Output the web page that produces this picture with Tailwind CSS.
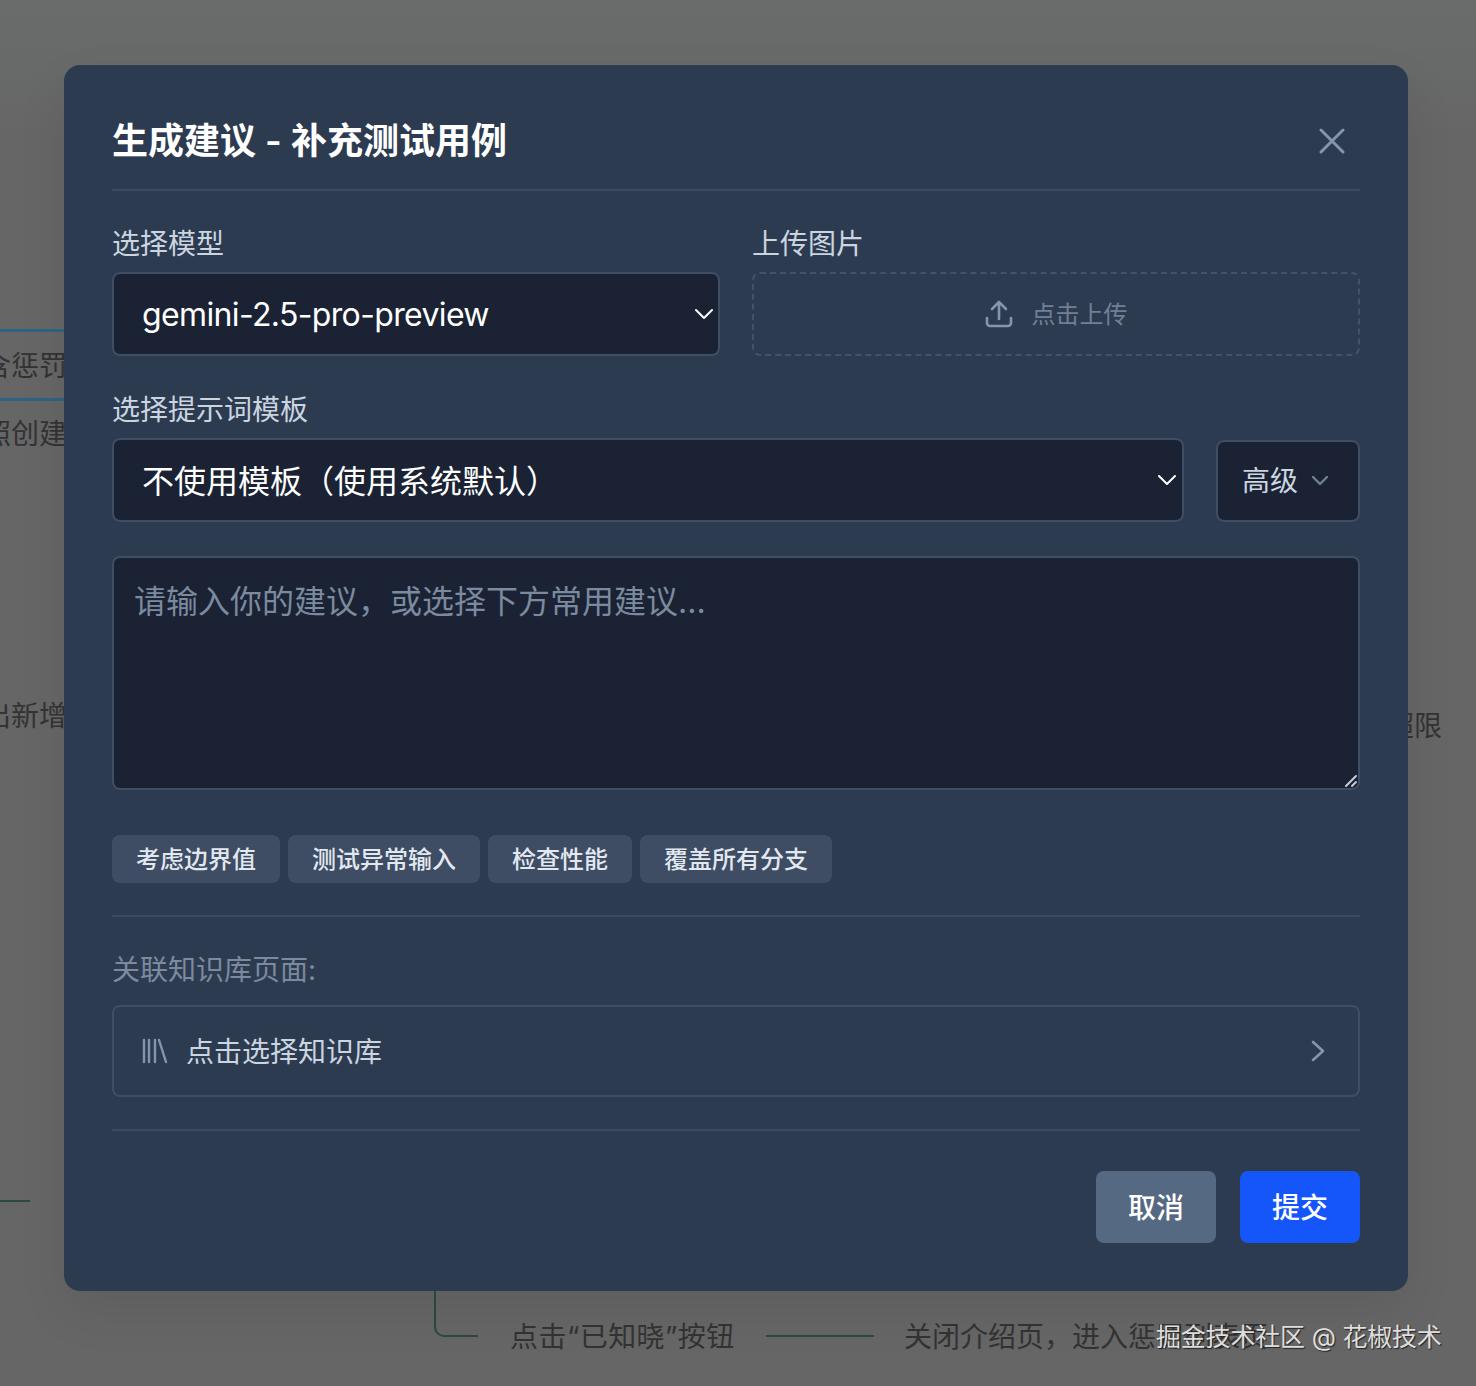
<!DOCTYPE html>
<html lang="zh-CN">
<head>
<meta charset="utf-8">
<script src="https://cdn.jsdelivr.net/npm/@tailwindcss/browser@4"></script>
<title>生成建议</title>
</head>
<body class="m-0 bg-[#666666] font-['Inter','Noto_Sans_CJK_SC',sans-serif]">
<div class="relative h-[1386px] w-[1476px] overflow-hidden bg-linear-to-b from-[#6a6c6c] to-[#666666] to-[10%]">
  <!-- dimmed page behind the dialog -->
  <div class="absolute left-0 top-[329px] h-[3px] w-[70px] bg-[#2d6483]"></div>
  <div class="absolute left-0 top-[398px] h-[3px] w-[70px] bg-[#2d6483]"></div>
  <div class="absolute left-[-17px] top-[346px] text-[28px] leading-[40px] text-[#333]">含惩罚</div>
  <div class="absolute left-[-17px] top-[414px] text-[28px] leading-[40px] text-[#333]">照创建</div>
  <div class="absolute left-[-17px] top-[696px] text-[28px] leading-[40px] text-[#333]">出新增</div>
  <div class="absolute left-[1386px] top-[706px] text-[28px] leading-[40px] text-[#333]">超限</div>
  <div class="absolute left-0 top-[1200px] h-[2px] w-[30px] bg-[#2b4a44]"></div>
  <div class="absolute left-[434px] top-[1280px] h-[57px] w-[44px] rounded-bl-[10px] border-b-2 border-l-2 border-[#2b4a44]"></div>
  <div class="absolute left-[510px] top-[1317px] text-[28px] leading-[40px] tracking-[0.45px] text-[#333]">点击“已知晓”按钮</div>
  <div class="absolute left-[766px] top-[1335px] h-[2px] w-[108px] bg-[#2b4a44]"></div>
  <div class="absolute left-[904px] top-[1317px] text-[28px] leading-[40px] text-[#333]">关闭介绍页，进入惩罚列表页</div>
  <div class="absolute left-[1156px] top-[1317px] z-20 text-[25px] leading-[40px] tracking-[-0.2px] text-[#dedede] [text-shadow:1px_1px_1px_#222]">掘金技术社区 @ 花椒技术</div>

  <!-- dialog -->
  <div class="absolute left-[64px] top-[65px] z-10 flex w-[1344px] flex-col rounded-[16px] bg-[#2d3b50] px-[48px] pb-[48px] shadow-[0_20px_50px_rgba(0,0,0,0.08)]">
    <div class="flex h-[126px] items-center justify-between border-b-2 border-[#3b4a61] pt-[44px] pb-[16px]">
      <h2 class="text-[36px] font-semibold leading-[44px] text-white">生成建议 - 补充测试用例</h2>
      <svg class="mr-[14px]" width="28" height="28" viewBox="0 0 28 28" fill="none" stroke="#8496ab" stroke-width="3" stroke-linecap="round"><path d="M3 3 25 25M25 3 3 25"/></svg>
    </div>

    <div class="mt-[31px] grid grid-cols-2 gap-[32px]">
      <div>
        <div class="mb-[6px] text-[28px] leading-[44px] text-[#cbd5e0]">选择模型</div>
        <div class="flex h-[84px] items-center justify-between rounded-[8px] border-2 border-[#3f4d65] bg-[#1a2233] pl-[28px] pr-[4px] text-[32px] text-white">
          <span class="pt-[2px] tracking-[-0.64px]">gemini-2.5-pro-preview</span>
          <svg width="20" height="12" viewBox="0 0 20 12" fill="none" stroke="#fff" stroke-width="2" stroke-linecap="round" stroke-linejoin="round"><path d="M2 2 10 10 18 2"/></svg>
        </div>
      </div>
      <div>
        <div class="mb-[6px] text-[28px] leading-[44px] text-[#cbd5e0]">上传图片</div>
        <div class="flex h-[84px] items-center justify-center gap-[19px] rounded-[8px] border-2 border-dashed border-[#445268] text-[24px] text-[#718096]">
          <svg width="28" height="28" viewBox="0 0 28 28" fill="none" stroke="#8496ab" stroke-width="2.6" stroke-linecap="round" stroke-linejoin="round"><path d="M14 19V2M7 9 14 2 21 9M2 18V23a3 3 0 0 0 3 3H23a3 3 0 0 0 3-3V18"/></svg>
          <span class="pt-[2px]">点击上传</span>
        </div>
      </div>
    </div>

    <div class="mt-[32px] text-[28px] leading-[44px] text-[#cbd5e0]">选择提示词模板</div>
    <div class="mt-[6px] flex items-end gap-[32px]">
      <div class="flex h-[84px] flex-1 items-center justify-between rounded-[8px] border-2 border-[#3f4d65] bg-[#1a2233] pl-[28px] pr-[5px] text-[32px] text-white">
        <span class="pt-[3px]">不使用模板（使用系统默认）</span>
        <svg width="20" height="12" viewBox="0 0 20 12" fill="none" stroke="#fff" stroke-width="2" stroke-linecap="round" stroke-linejoin="round"><path d="M2 2 10 10 18 2"/></svg>
      </div>
      <div class="flex h-[82px] w-[144px] items-center gap-[12px] rounded-[8px] border-2 border-[#3f4d65] bg-[#1a2233] pl-[24px] text-[28px] text-[#cbd5e0]">
        <span>高级</span>
        <svg width="20" height="12" viewBox="0 0 20 12" fill="none" stroke="#718096" stroke-width="2.4" stroke-linecap="round" stroke-linejoin="round"><path d="M3 2 10 9 17 2"/></svg>
      </div>
    </div>

    <div class="relative mt-[34px]">
      <textarea class="block h-[234px] w-full resize-none rounded-[8px] border-2 border-[#3f4d65] bg-[#1a2233] px-[20px] py-[20px] text-[32px] leading-[48px] text-white outline-none placeholder:text-[#7b8a9f]" placeholder="请输入你的建议，或选择下方常用建议..."></textarea>
      <svg class="pointer-events-none absolute bottom-[2px] right-[2px]" width="14" height="14" viewBox="0 0 14 14" fill="none" stroke="#c9ced6" stroke-width="2" stroke-linecap="round"><path d="M2 12 12 2M8 12 12 8"/></svg>
    </div>

    <div class="mt-[45px] flex gap-[8px]">
      <button class="h-[48px] rounded-[8px] bg-[#3e4c64] px-[24px] pt-[2px] text-[24px] font-medium text-[#e2e8f0]">考虑边界值</button>
      <button class="h-[48px] rounded-[8px] bg-[#3e4c64] px-[24px] pt-[2px] text-[24px] font-medium text-[#e2e8f0]">测试异常输入</button>
      <button class="h-[48px] rounded-[8px] bg-[#3e4c64] px-[24px] pt-[2px] text-[24px] font-medium text-[#e2e8f0]">检查性能</button>
      <button class="h-[48px] rounded-[8px] bg-[#3e4c64] px-[24px] pt-[2px] text-[24px] font-medium text-[#e2e8f0]">覆盖所有分支</button>
    </div>

    <div class="mt-[32px] border-t-2 border-[#3b4a61] pt-[32px]">
      <div class="text-[28px] leading-[42px] text-[#7b8a9f]">关联知识库页面:</div>
      <div class="mt-[14px] flex h-[92px] items-center justify-between rounded-[8px] border-2 border-[#3f4d65] pl-[26px] pr-[33px]">
        <div class="flex items-center gap-[18px] text-[28px] text-[#cbd5e0]">
          <svg width="28" height="26" viewBox="0 0 28 26" fill="none" stroke="#8496ab" stroke-width="2.4" stroke-linecap="round"><path d="M4 2V24M9 2V24M15 2V24M19 2 26 24"/></svg>
          <span class="pt-[2px]">点击选择知识库</span>
        </div>
        <svg width="14" height="22" viewBox="0 0 14 22" fill="none" stroke="#8496ab" stroke-width="2.6" stroke-linecap="round" stroke-linejoin="round"><path d="M2 2 12 11 2 20"/></svg>
      </div>
    </div>

    <div class="mt-[32px] flex justify-end gap-[24px] border-t-2 border-[#3b4a61] pt-[40px]">
      <button class="h-[72px] w-[120px] rounded-[8px] bg-[#566982] pt-[2px] text-[28px] font-medium text-white">取消</button>
      <button class="h-[72px] w-[120px] rounded-[8px] bg-[#1556fb] pt-[2px] text-[28px] font-medium text-white">提交</button>
    </div>
  </div>
</div>
</body>
</html>
